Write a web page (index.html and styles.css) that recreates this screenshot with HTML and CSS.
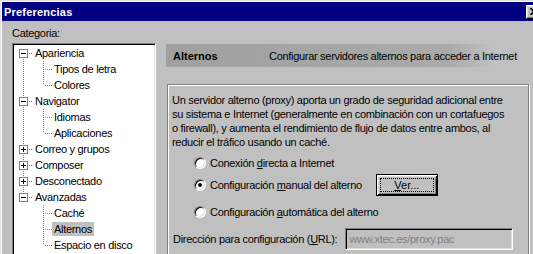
FILE: index.html
```html
<!DOCTYPE html>
<html lang="es">
<head>
    <meta charset="UTF-8">
    <title>Preferencias</title>
    <link rel="stylesheet" href="styles.css">
</head>
<body>
    <div class="window">
        <div class="titlebar">
            <span class="title">Preferencias</span>
            <span class="close">
                <svg width="8" height="7" viewBox="0 0 8 7"><path d="M0.5 0L7.5 7M7.5 0L0.5 7" stroke="#000" stroke-width="1.6"/></svg>
            </span>
        </div>
        <div class="content">
            <div class="side">
                <div class="cat-label">Categoria:</div>
                <div class="tree">
                    <ul class="root">
                        <li>
                            <div class="row">
                                <svg class="twisty" width="9" height="9"><rect x="0.5" y="0.5" width="8" height="8" fill="#fff" stroke="#808080"/><path d="M2 4.5h5" stroke="#000"/></svg>
                                <span class="dash"></span><span class="label">Apariencia</span>
                            </div>
                            <ul class="kids">
                                <li class="row"><span class="dash"></span><span class="label">Tipos de letra</span></li>
                                <li class="row"><span class="dash"></span><span class="label">Colores</span></li>
                            </ul>
                        </li>
                        <li>
                            <div class="row">
                                <svg class="twisty" width="9" height="9"><rect x="0.5" y="0.5" width="8" height="8" fill="#fff" stroke="#808080"/><path d="M2 4.5h5" stroke="#000"/></svg>
                                <span class="dash"></span><span class="label">Navigator</span>
                            </div>
                            <ul class="kids">
                                <li class="row"><span class="dash"></span><span class="label">Idiomas</span></li>
                                <li class="row"><span class="dash"></span><span class="label">Aplicaciones</span></li>
                            </ul>
                        </li>
                        <li>
                            <div class="row">
                                <svg class="twisty" width="9" height="9"><rect x="0.5" y="0.5" width="8" height="8" fill="#fff" stroke="#808080"/><path d="M2 4.5h5M4.5 2v5" stroke="#000"/></svg>
                                <span class="dash"></span><span class="label">Correo y grupos</span>
                            </div>
                        </li>
                        <li>
                            <div class="row">
                                <svg class="twisty" width="9" height="9"><rect x="0.5" y="0.5" width="8" height="8" fill="#fff" stroke="#808080"/><path d="M2 4.5h5M4.5 2v5" stroke="#000"/></svg>
                                <span class="dash"></span><span class="label">Composer</span>
                            </div>
                        </li>
                        <li>
                            <div class="row">
                                <svg class="twisty" width="9" height="9"><rect x="0.5" y="0.5" width="8" height="8" fill="#fff" stroke="#808080"/><path d="M2 4.5h5M4.5 2v5" stroke="#000"/></svg>
                                <span class="dash"></span><span class="label">Desconectado</span>
                            </div>
                        </li>
                        <li>
                            <div class="row">
                                <svg class="twisty" width="9" height="9"><rect x="0.5" y="0.5" width="8" height="8" fill="#fff" stroke="#808080"/><path d="M2 4.5h5" stroke="#000"/></svg>
                                <span class="dash"></span><span class="label">Avanzadas</span>
                            </div>
                            <ul class="kids">
                                <li class="row"><span class="dash"></span><span class="label">Caché</span></li>
                                <li class="row"><span class="dash"></span><span class="label selected">Alternos</span></li>
                                <li class="row"><span class="dash"></span><span class="label">Espacio en disco</span></li>
                            </ul>
                        </li>
                    </ul>
                </div>
            </div>

            <div class="main">
                <div class="header">
                    <b class="h-title">Alternos</b>
                    <span>Configurar servidores alternos para acceder a Internet</span>
                </div>
                <div class="group">
                    <p class="intro">
                        Un servidor alterno (proxy) aporta un grado de seguridad adicional entre<br>
                        su sistema e Internet (generalmente en combinación con un cortafuegos<br>
                        o firewall), y aumenta el rendimiento de flujo de datos entre ambos, al<br>
                        reducir el tráfico usando un caché.
                    </p>
                    <div class="option first">
                        <span class="radio"></span><span>Conexión <u>d</u>irecta a Internet</span>
                    </div>
                    <div class="option second">
                        <span class="radio on"></span><span>Configuración <u>m</u>anual del alterno</span>
                        <button class="btn" type="button"><span class="focus"><u>V</u>er...</span></button>
                    </div>
                    <div class="option third">
                        <span class="radio"></span><span>Configuración <u>a</u>utomática del alterno</span>
                    </div>
                    <div class="url-row">
                        <span>Dirección para configuración (<u>U</u>RL):</span>
                        <input class="field" type="text" value="www.xtec.es/proxy.pac" disabled>
                    </div>
                </div>
            </div>
        </div>
    </div>
</body>
</html>
```

FILE: styles.css
```css
body {
    margin: 0;
    width: 533px;
    height: 254px;
    overflow: hidden;
    background-color: #c0c0c0;
    font-family: "Liberation Sans", Arial, sans-serif;
    font-size: 11px;
    letter-spacing: -0.3px;
    color: #000;
}

.window {
    width: 542px;
    height: 253px;
    overflow: hidden;
    border-top: 1px solid #dfdfdf;
    border-left: 1px solid #dfdfdf;
    box-shadow: inset 1px 1px #fff;
    padding: 1px 0 0 1px;
}

.titlebar {
    height: 19px;
    display: flex;
    align-items: center;
    justify-content: space-between;
    padding: 0 2px;
    background-color: #000080;
    color: #fff;
}

.title {
    font-weight: bold;
    letter-spacing: 0.2px;
}

.close {
    width: 16px;
    height: 14px;
    box-sizing: border-box;
    display: flex;
    align-items: center;
    justify-content: center;
    background-color: #c0c0c0;
    border: 1px solid;
    border-color: #fff #000 #000 #fff;
    box-shadow: inset -1px -1px #808080, inset 1px 1px #dfdfdf;
}

.content {
    display: flex;
    gap: 10px;
    padding-left: 10px;
}

.side {
    width: 144px;
    flex: none;
}

.cat-label {
    margin: 6px 0 3px;
    line-height: 13px;
}

.tree {
    box-sizing: border-box;
    width: 144px;
    height: 240px;
    padding: 1px;
    background-color: #fff;
    border: 1px solid;
    border-color: #808080 #fff #fff #808080;
    box-shadow: inset 1px 1px #000, inset -1px -1px #dfdfdf;
}

.tree ul {
    list-style: none;
    margin: 0;
    padding: 0;
}

.root {
    background: repeating-linear-gradient(to bottom, #808080 0 1px, transparent 1px 2px) 9px 8px / 1px 144px no-repeat;
}

.row {
    height: 16px;
    display: flex;
    align-items: center;
}

.twisty {
    margin-left: 5px;
    flex: none;
}

.dash {
    width: 5px;
    height: 1px;
    flex: none;
    background: repeating-linear-gradient(to right, transparent 0 1px, #808080 1px 2px);
}

.label {
    padding: 0 2px;
    line-height: 14px;
    white-space: nowrap;
}

.label.selected {
    background-color: #c0c0c0;
}

.tree .kids {
    margin-left: 29px;
    background: repeating-linear-gradient(to bottom, #808080 0 1px, transparent 1px 2px) 0 0 / 1px calc(100% - 8px) no-repeat;
}

.kids .row {
    padding-left: 1px;
}

.kids .dash {
    width: 8px;
}

.main {
    width: 364px;
    flex: none;
}

.header {
    height: 23px;
    margin-top: 23px;
    padding-left: 7px;
    display: flex;
    align-items: center;
    background: linear-gradient(to right, #a0a0a0 0%, #a4a4a4 30%, #aaaaaa 78%, #c0c0c0 90%);
    white-space: nowrap;
}

.h-title {
    width: 96px;
    flex: none;
    letter-spacing: 0;
}

.group {
    height: 200px;
    margin: 17px 1px 0;
    padding: 8px 4px 0;
    border: 1px solid #808080;
    box-shadow: inset 1px 1px #fff, 1px 1px #fff;
}

.intro {
    margin: 0;
    line-height: 14px;
    white-space: nowrap;
}

.option {
    display: flex;
    align-items: center;
    margin-left: 22px;
    white-space: nowrap;
}

.option.first {
    height: 16px;
    margin-top: 6px;
}

.option.second {
    height: 22px;
    margin-top: 3px;
}

.option.third {
    height: 16px;
    margin-top: 8px;
}

.radio {
    width: 12px;
    height: 12px;
    box-sizing: border-box;
    flex: none;
    margin-right: 4px;
    display: flex;
    align-items: center;
    justify-content: center;
    border-radius: 50%;
    background-color: #fff;
    border: 1px solid;
    border-color: #808080 #fff #fff #808080;
    box-shadow: inset 1px 1px #000, inset -1px -1px #dfdfdf;
}

.radio.on::after {
    content: "";
    width: 4px;
    height: 4px;
    border-radius: 50%;
    background-color: #000;
}

.btn {
    width: 62px;
    height: 22px;
    margin-left: 14px;
    padding: 3px;
    box-sizing: border-box;
    background-color: #c0c0c0;
    border: 1px solid #000;
    box-shadow: inset 1px 1px #fff, inset -1px -1px #000, inset 2px 2px #dfdfdf, inset -2px -2px #808080;
    font: inherit;
    color: #000;
}

.focus {
    display: block;
    height: 14px;
    line-height: 13px;
    box-sizing: border-box;
    border: 1px dotted #000;
}

.url-row {
    display: flex;
    align-items: center;
    height: 22px;
    margin: 8px 0 0 1px;
    white-space: nowrap;
}

.field {
    width: 168px;
    height: 22px;
    box-sizing: border-box;
    margin: 0 0 0 8px;
    padding: 0 3px;
    background-color: #c0c0c0;
    border: 1px solid;
    border-color: #808080 #fff #fff #808080;
    box-shadow: inset 1px 1px #000, inset -1px -1px #dfdfdf;
    font: inherit;
    letter-spacing: inherit;
    outline: none;
}

.field:disabled {
    color: #808080;
    background-color: #c0c0c0;
}
```
